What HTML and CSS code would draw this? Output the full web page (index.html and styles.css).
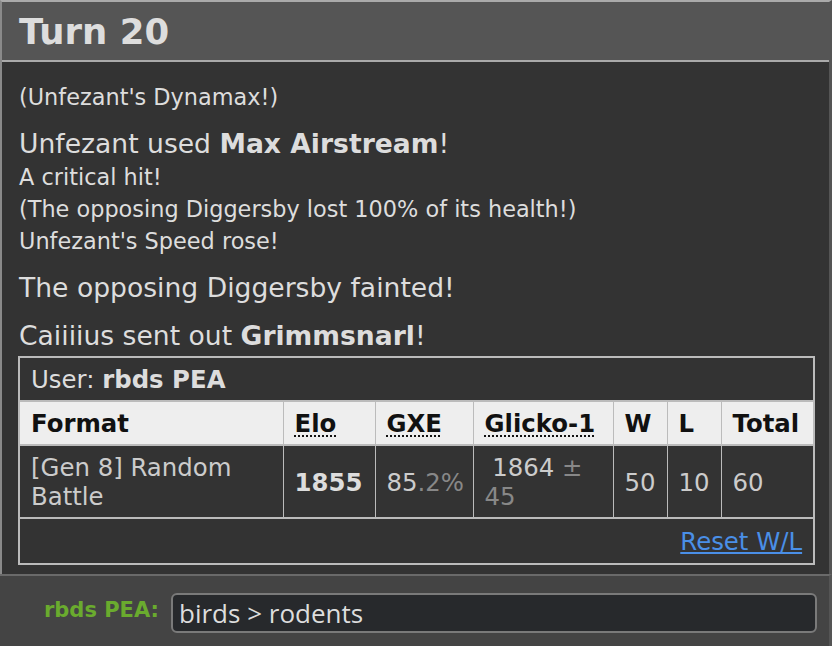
FILE: index.html
```html
<!DOCTYPE html>
<html lang="en">
<head>
    <meta charset="UTF-8">
    <meta name="viewport" content="width=device-width, initial-scale=1.0">
    <title>Battle Log</title>
    <link rel="stylesheet" href="styles.css">
</head>
<body>
    <div class="battle-log">
        <h2 class="turn">Turn 20</h2>
        <div class="history">
            <div class="chat">(Unfezant's Dynamax!)</div>

            <div class="msg">
                <div class="big">Unfezant used <strong>Max Airstream</strong>!</div>
                <div>A critical hit!</div>
                <div>(The opposing Diggersby lost 100% of its health!)</div>
                <div>Unfezant's Speed rose!</div>
            </div>

            <div class="msg">
                <div class="big">The opposing Diggersby fainted!</div>
            </div>

            <div class="msg">
                <div class="big">Caiiiius sent out <strong>Grimmsnarl</strong>!</div>
            </div>

            <table class="ladder">
                <colgroup>
                    <col class="col-format">
                    <col class="col-elo">
                    <col class="col-gxe">
                    <col class="col-glicko">
                    <col class="col-w">
                    <col class="col-l">
                    <col class="col-total">
                </colgroup>
                <tr>
                    <td colspan="7" class="user">User: <strong>rbds PEA</strong></td>
                </tr>
                <tr class="head">
                    <th>Format</th>
                    <th><abbr>Elo</abbr></th>
                    <th><abbr>GXE</abbr></th>
                    <th><abbr>Glicko-1</abbr></th>
                    <th>W</th>
                    <th>L</th>
                    <th>Total</th>
                </tr>
                <tr class="row">
                    <td>[Gen 8] Random Battle</td>
                    <td><strong>1855</strong></td>
                    <td>85<span class="dim">.2%</span></td>
                    <td>&nbsp;1864 <span class="dim">± 45</span></td>
                    <td>50</td>
                    <td>10</td>
                    <td>60</td>
                </tr>
                <tr>
                    <td colspan="7" class="reset"><a href="#">Reset W/L</a></td>
                </tr>
            </table>
        </div>
    </div>

    <div class="chatbar">
        <label for="chat-input">rbds PEA:</label>
        <input type="text" id="chat-input" value="birds &gt; rodents">
    </div>
</body>
</html>
```

FILE: styles.css
```css
body {
    margin: 0;
    background-color: #444;
    font-family: "DejaVu Sans", Verdana, sans-serif;
    color: #ddd;
    overflow: hidden;
}

.battle-log {
    height: 572px;
    background-color: #333;
    border-top: 2px solid #aaa;
    border-left: 2px solid #8a8a8a;
    border-right: 3px solid #555;
}

.turn {
    margin: 0;
    height: 58px;
    padding-left: 17px;
    background-color: #555;
    border-bottom: 2px solid #aaa;
    font-size: 35.5px;
    line-height: 59px;
    font-weight: bold;
    color: #ddd;
}

.history {
    padding: 19px 0 0 17px;
    font-size: 22.4px;
    line-height: 32px;
}

.msg {
    margin-top: 14px;
}

.big {
    font-size: 26.6px;
    line-height: 34px;
}

.ladder {
    margin: 3px 0 0 -1px;
    width: 795px;
    table-layout: fixed;
    border-collapse: collapse;
    border: 2px solid #bbb;
    font-size: 24.4px;
    line-height: 29px;
}

.col-format { width: 264px; }
.col-elo { width: 92px; }
.col-gxe { width: 98px; }
.col-glicko { width: 140px; }
.col-w { width: 54px; }
.col-l { width: 54px; }
.col-total { width: 93px; }

.ladder td, .ladder th {
    padding: 7px 11px 6px;
    border: 1px solid #bbb;
    text-align: left;
    vertical-align: middle;
}

.ladder tr + tr td, .ladder tr + tr th {
    border-top-width: 2px;
}

.ladder .head th {
    background-color: #eee;
    color: #111;
    font-weight: bold;
}

abbr {
    text-decoration: underline dotted;
    text-decoration-thickness: 2px;
    text-underline-offset: 3px;
}

.row td {
    color: #ccc;
}

.row strong {
    color: #ddd;
}

.dim {
    color: #888;
}

.ladder .reset {
    text-align: right;
    padding: 8px 11px 7px;
}

.reset a {
    color: #4a8fe7;
}

.chatbar {
    display: flex;
    align-items: flex-start;
    height: 72px;
    box-sizing: border-box;
    padding-top: 17px;
    border-top: 2px solid #6a6a6a;
    border-right: 3px solid #555;
}

.chatbar label {
    width: 159px;
    text-align: right;
    margin-right: 12px;
    font-size: 21px;
    line-height: 34px;
    font-weight: bold;
    color: #6aab2e;
}

.chatbar input {
    width: 646px;
    height: 40px;
    box-sizing: border-box;
    padding: 0 6px;
    border: 2px solid #7a7a7a;
    border-radius: 6px;
    background-color: #27292c;
    color: #ddd;
    font-family: "Open Sans", sans-serif;
    font-size: 26px;
    outline: none;
}
```
